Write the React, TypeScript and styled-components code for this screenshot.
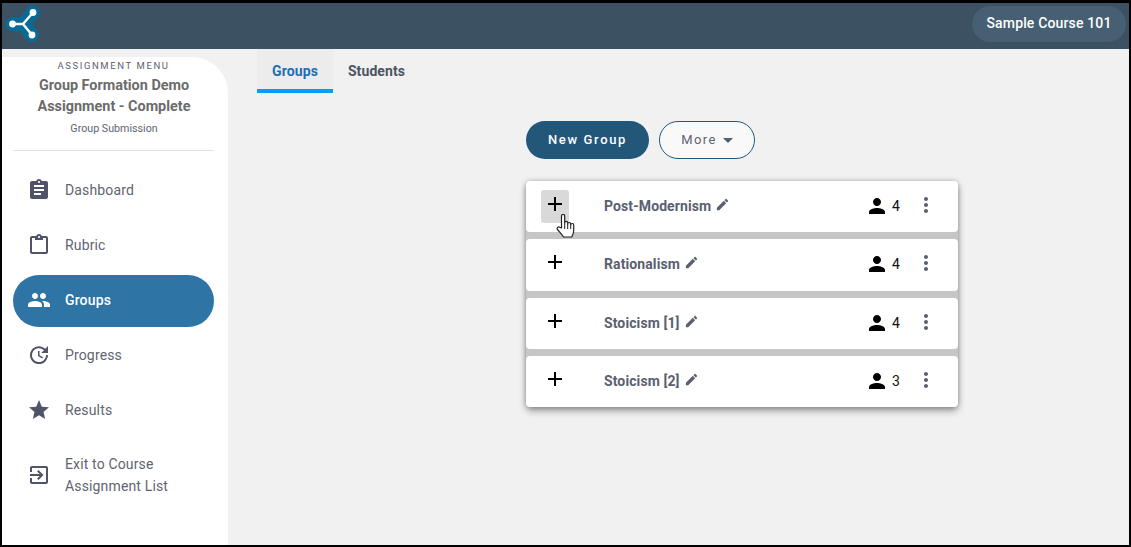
import React from 'react';
import styled, { createGlobalStyle } from 'styled-components';

const GlobalStyle = createGlobalStyle`
  html, body {
    margin: 0;
    padding: 0;
    height: 100%;
    background: #000;
    font-family: Roboto, "Liberation Sans", sans-serif;
  }
`;

const Frame = styled.div`
  box-sizing: border-box;
  width: 1131px;
  height: 547px;
  border-style: solid;
  border-color: #000;
  border-width: 3px 2px 2px 2px;
  background: #f1f1f1;
  display: flex;
  flex-direction: column;
  overflow: hidden;
  position: relative;
`;

const Header = styled.header`
  height: 46px;
  flex: none;
  background: #3c5162;
  display: flex;
  align-items: center;
  justify-content: space-between;
  padding: 0 3px 0 2px;
`;

const Logo = styled.svg`
  width: 40px;
  height: 42px;
  display: block;
`;

const CoursePill = styled.div`
  height: 36px;
  width: 154px;
  margin-top: -4px;
  border-radius: 18px;
  background: #465f72;
  color: #fff;
  font-size: 14px;
  font-weight: 500;
  letter-spacing: 0.15px;
  display: flex;
  align-items: center;
  justify-content: center;
  box-sizing: border-box;
  padding-bottom: 2px;
`;

const Body = styled.div`
  flex: 1;
  display: flex;
  min-height: 0;
`;

const Sidebar = styled.aside`
  width: 226px;
  flex: none;
  margin-top: 8px;
  background: #fff;
  border-radius: 0 36px 0 0;
  display: flex;
  flex-direction: column;
  box-sizing: border-box;
  padding-top: 3px;
`;

const MenuLabel = styled.div`
  font-size: 9.5px;
  letter-spacing: 1.6px;
  color: #5d6470;
  text-align: center;
  line-height: 11px;
  padding-right: 3px;
`;

const AssignmentTitle = styled.div`
  font-size: 14.4px;
  font-weight: 700;
  color: #6b6b6b;
  line-height: 21px;
  text-align: center;
  margin-top: 4px;
  padding-right: 2px;
`;

const Submission = styled.div`
  font-size: 10.7px;
  color: #5d6470;
  text-align: center;
  line-height: 14px;
  margin-top: 5px;
  padding-right: 2px;
`;

const Divider = styled.hr`
  border: 0;
  border-top: 1px solid #e2e2e2;
  margin: 14px 14px 0 11px;
`;

const Nav = styled.nav`
  display: flex;
  flex-direction: column;
  margin: 14px 14px 0 11px;
  gap: 3px;
`;

const NavItem = styled.a<{ $active?: boolean; $tall?: boolean }>`
  box-sizing: border-box;
  height: ${p => (p.$tall ? '66px' : '52px')};
  margin-top: ${p => (p.$tall ? '3px' : '0')};
  border-radius: 26px;
  display: flex;
  align-items: center;
  gap: 14px;
  padding-left: 14px;
  padding-bottom: 2px;
  font-size: 14px;
  line-height: 22px;
  color: ${p => (p.$active ? '#fff' : '#5f6470')};
  font-weight: ${p => (p.$active ? 500 : 400)};
  letter-spacing: 0.15px;
  background: ${p => (p.$active ? '#2e74a5' : 'transparent')};
`;

const NavIcon = styled.svg`
  width: 24px;
  height: 24px;
  flex: none;
`;

const NavGlyph = styled(NavIcon)<{ $active?: boolean }>`
  fill: ${p => (p.$active ? '#fff' : '#4f5468')};
`;

const Main = styled.main`
  flex: 1;
  display: flex;
  flex-direction: column;
  padding-left: 29px;
  min-width: 0;
`;

const Tabs = styled.div`
  display: flex;
  height: 44px;
  flex: none;
`;

const Tab = styled.button<{ $active?: boolean }>`
  width: ${p => (p.$active ? '76px' : '87px')};
  border: 0;
  padding: 4px 0 0;
  font-family: inherit;
  font-size: 14px;
  font-weight: 700;
  letter-spacing: 0.1px;
  color: ${p => (p.$active ? '#1a6fb5' : '#4b5563')};
  background: ${p => (p.$active ? '#ececec' : 'transparent')};
  border-bottom: 4px solid ${p => (p.$active ? '#0a9bfb' : 'transparent')};
`;

const Content = styled.div`
  margin-left: 269px;
  width: 432px;
  display: flex;
  flex-direction: column;
  position: relative;
`;

const Actions = styled.div`
  display: flex;
  gap: 10px;
  margin-top: 28px;
`;

const PrimaryButton = styled.button`
  width: 123px;
  height: 38px;
  border: 0;
  border-radius: 19px;
  background: #22577a;
  color: #fff;
  font-family: inherit;
  font-size: 13px;
  font-weight: 500;
  letter-spacing: 1.65px;
  padding: 0 0 2px;
`;

const SecondaryButton = styled.button`
  width: 96px;
  height: 38px;
  border: 1px solid #22577a;
  border-radius: 19px;
  background: #f9f9f9;
  color: #5f6470;
  font-family: inherit;
  font-size: 13px;
  letter-spacing: 1.45px;
  display: flex;
  align-items: center;
  justify-content: center;
  gap: 6px;
  padding: 0 0 2px;
`;

const Caret = styled.span`
  width: 0;
  height: 0;
  margin-top: 2px;
  border-left: 5px solid transparent;
  border-right: 5px solid transparent;
  border-top: 5px solid #4f5f75;
`;

const GroupList = styled.div`
  margin-top: 22px;
  display: flex;
  flex-direction: column;
  background: #c6c6c6;
  border-radius: 5px;
  box-shadow: 0 4px 7px rgba(0, 0, 0, 0.35), 0 0 5px rgba(0, 0, 0, 0.25);
  gap: 7px;
`;

const GroupCard = styled.div<{ $height: number }>`
  height: ${p => p.$height}px;
  background: #fff;
  border-radius: 4px;
  display: flex;
  align-items: flex-start;
  box-sizing: border-box;
  padding-top: 9px;
`;

const AddButton = styled.div<{ $hover?: boolean }>`
  width: 28px;
  height: 33px;
  margin-left: 15px;
  border-radius: 3px;
  background: ${p => (p.$hover ? '#d9d9d9' : 'transparent')};
  display: flex;
  align-items: center;
  justify-content: center;
  flex: none;
`;

const PlusIcon = styled.svg`
  width: 24px;
  height: 24px;
  margin-top: -5px;
`;

const GroupName = styled.div`
  box-sizing: border-box;
  margin-left: 35px;
  width: 261px;
  height: 33px;
  padding-bottom: 2px;
  display: flex;
  align-items: center;
  gap: 4px;
  font-size: 14px;
  font-weight: 700;
  letter-spacing: 0.1px;
  color: #5a6070;
  flex: none;
`;

const PencilIcon = styled.svg`
  width: 15px;
  height: 15px;
  fill: #5a6070;
  margin-top: -3px;
`;

const Members = styled.div`
  box-sizing: border-box;
  width: 38px;
  height: 33px;
  padding-bottom: 2px;
  display: flex;
  align-items: center;
  font-size: 14px;
  color: #111;
  gap: 3px;
  flex: none;
`;

const PersonIcon = styled.svg`
  width: 24px;
  height: 24px;
  fill: #000;
  flex: none;
`;

const MenuIcon = styled.svg`
  width: 24px;
  height: 24px;
  fill: #5a6070;
  margin: 3px 0 0 11px;
  flex: none;
`;

const HandCursor = styled.svg`
  position: absolute;
  left: 30px;
  top: 121px;
  width: 19px;
  height: 24px;
`;

const groups = [
  { name: 'Post-Modernism', count: 4, height: 51, hover: true },
  { name: 'Rationalism', count: 4, height: 52 },
  { name: 'Stoicism [1]', count: 4, height: 51 },
  { name: 'Stoicism [2]', count: 3, height: 51 },
];

const navItems = [
  { label: 'Dashboard', d: 'M19 3h-4.18C14.4 1.84 13.3 1 12 1c-1.3 0-2.4.84-2.82 2H5c-1.1 0-2 .9-2 2v14c0 1.1.9 2 2 2h14c1.1 0 2-.9 2-2V5c0-1.1-.9-2-2-2zm-7 0c.55 0 1 .45 1 1s-.45 1-1 1-1-.45-1-1 .45-1 1-1zm2 14H7v-2h7v2zm3-4H7v-2h10v2zm0-4H7V7h10v2z' },
  { label: 'Rubric', d: 'M19 3h-4.18C14.4 1.84 13.3 1 12 1s-2.4.84-2.82 2H5c-1.1 0-2 .9-2 2v14c0 1.1.9 2 2 2h14c1.1 0 2-.9 2-2V5c0-1.1-.9-2-2-2zm-7 0c.55 0 1 .45 1 1s-.45 1-1 1-1-.45-1-1 .45-1 1-1zm7 16H5V5h3v2h8V5h3v14z' },
  { label: 'Groups', active: true, d: 'M16 11c1.66 0 2.99-1.34 2.99-3S17.66 5 16 5c-1.66 0-3 1.34-3 3s1.34 3 3 3zm-8 0c1.66 0 2.99-1.34 2.99-3S9.66 5 8 5C6.34 5 5 6.34 5 8s1.34 3 3 3zm0 2c-2.33 0-7 1.17-7 3.5V19h14v-2.5c0-2.33-4.67-3.5-7-3.5zm8 0c-.29 0-.62.02-.97.05 1.16.84 1.97 1.97 1.97 3.45V19h6v-2.5c0-2.33-4.67-3.5-7-3.5z' },
  { label: 'Progress', d: 'M21 10.12h-6.78l2.74-2.82c-2.73-2.7-7.15-2.8-9.88-.1-2.73 2.71-2.73 7.08 0 9.79s7.15 2.71 9.88 0C18.32 15.65 19 14.08 19 12.1h2c0 1.98-.88 4.55-2.64 6.29-3.51 3.48-9.21 3.48-12.72 0-3.5-3.47-3.53-9.11-.02-12.58s9.14-3.47 12.65 0L21 3v7.12zM12.5 8v4.25l3.5 2.08-.72 1.21L11 13V8h1.5z' },
  { label: 'Results', d: 'M12 17.27L18.18 21l-1.64-7.03L22 9.24l-7.19-.61L12 2 9.19 8.63 2 9.24l5.46 4.73L5.82 21z' },
];

const exitPath = 'M10.09 15.59L11.5 17l5-5-5-5-1.41 1.41L12.67 11H3v2h9.67l-2.58 2.59zM19 3H5c-1.11 0-2 .9-2 2v4h2V5h14v14H5v-4H3v4c0 1.1.89 2 2 2h14c1.1 0 2-.9 2-2V5c0-1.1-.9-2-2-2z';

const App: React.FC = () => {
  return (
    <>
      <GlobalStyle />
      <Frame>
        <Header>
          {/* logo coords: viewBox origin sits at page (4,5) */}
          <Logo viewBox="0 0 40 42">
            <path d="M29 7.5L19 19L28 30M8.5 19H19" stroke="#0a6a96" strokeWidth="14" strokeLinecap="round" strokeLinejoin="round" fill="none" />
            <path d="M29 7.5L19 19L28 30M8.5 19H19" stroke="#fff" strokeWidth="2.4" fill="none" />
            <circle cx="29" cy="7.5" r="3.4" fill="#fff" />
            <circle cx="28" cy="30" r="3.4" fill="#fff" />
            <circle cx="8.5" cy="19" r="3.4" fill="#fff" />
          </Logo>
          <CoursePill>Sample Course 101</CoursePill>
        </Header>
        <Body>
          <Sidebar>
            <MenuLabel>ASSIGNMENT MENU</MenuLabel>
            <AssignmentTitle>
              Group Formation Demo
              <br />
              Assignment - Complete
            </AssignmentTitle>
            <Submission>Group Submission</Submission>
            <Divider />
            <Nav>
              {navItems.map(item => (
                <NavItem key={item.label} $active={item.active}>
                  <NavGlyph viewBox="0 0 24 24" $active={item.active}>
                    <path d={item.d} />
                  </NavGlyph>
                  {item.label}
                </NavItem>
              ))}
              <NavItem $tall>
                <NavGlyph viewBox="0 0 24 24">
                  <path d={exitPath} />
                </NavGlyph>
                <span>
                  Exit to Course
                  <br />
                  Assignment List
                </span>
              </NavItem>
            </Nav>
          </Sidebar>
          <Main>
            <Tabs>
              <Tab $active>Groups</Tab>
              <Tab>Students</Tab>
            </Tabs>
            <Content>
              <Actions>
                <PrimaryButton>New Group</PrimaryButton>
                <SecondaryButton>
                  More <Caret />
                </SecondaryButton>
              </Actions>
              <GroupList>
                {groups.map(group => (
                  <GroupCard key={group.name} $height={group.height}>
                    <AddButton $hover={group.hover}>
                      <PlusIcon viewBox="0 0 24 24">
                        <path d="M19 13h-6v6h-2v-6H5v-2h6V5h2v6h6v2z" fill="#000" />
                      </PlusIcon>
                    </AddButton>
                    <GroupName>
                      {group.name}
                      <PencilIcon viewBox="0 0 24 24">
                        <path d="M3 17.25V21h3.75L17.81 9.94l-3.75-3.75L3 17.25zM20.71 7.04c.39-.39.39-1.02 0-1.41l-2.34-2.34c-.39-.39-1.02-.39-1.41 0l-1.83 1.83 3.75 3.75 1.83-1.83z" />
                      </PencilIcon>
                    </GroupName>
                    <Members>
                      <PersonIcon viewBox="0 0 24 24">
                        <path d="M12 12c2.21 0 4-1.79 4-4s-1.79-4-4-4-4 1.79-4 4 1.79 4 4 4zm0 2c-2.67 0-8 1.34-8 4v2h16v-2c0-2.66-5.33-4-8-4z" />
                      </PersonIcon>
                      {group.count}
                    </Members>
                    <MenuIcon viewBox="0 0 24 24">
                      <path d="M12 8c1.1 0 2-.9 2-2s-.9-2-2-2-2 .9-2 2 .9 2 2 2zm0 2c-1.1 0-2 .9-2 2s.9 2 2 2 2-.9 2-2-.9-2-2-2zm0 6c-1.1 0-2 .9-2 2s.9 2 2 2 2-.9 2-2-.9-2-2-2z" />
                    </MenuIcon>
                  </GroupCard>
                ))}
              </GroupList>
              <HandCursor viewBox="0 0 19 24">
                <path d="M5.5 14V2a1.6 1.6 0 0 1 3.2 0v7.5V8.8a1.5 1.5 0 0 1 3 0v1.2a1.5 1.5 0 0 1 3 0v1a1.5 1.5 0 0 1 3 0v5.5c0 3-1 4.5-2 6.5H7.5c-1.2-2-3.5-4.5-6-7.5-1.2-1.6.8-3.4 2.2-2.2z" fill="#fff" stroke="#222" strokeWidth="1.2" strokeLinejoin="round" />
                <path d="M8.7 10v5M11.7 10v5M14.7 11v4" stroke="#222" strokeWidth="1" fill="none" />
              </HandCursor>
            </Content>
          </Main>
        </Body>
      </Frame>
    </>
  );
};

export default App;
